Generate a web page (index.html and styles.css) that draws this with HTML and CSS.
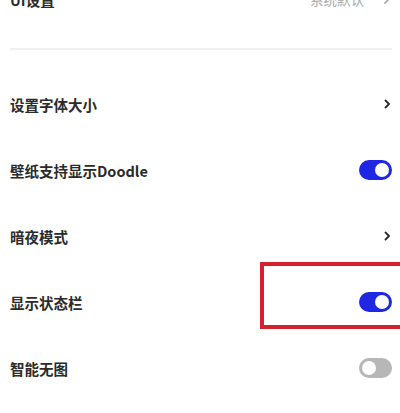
FILE: index.html
```html
<!DOCTYPE html>
<html lang="zh-CN">
<head>
  <meta charset="UTF-8" />
  <meta name="viewport" content="width=device-width, initial-scale=1.0"/>
  <title>设置</title>
  <link rel="stylesheet" href="styles.css">
</head>
<body>
  <div class="settings">
    <div class="item top">
      <span class="label">UI设置</span>
      <span class="value">系统默认</span>
      <svg class="chevron faded" viewBox="0 0 6 10" width="6" height="10"><path d="M1 1l4 4-4 4" /></svg>
    </div>

    <div class="divider"></div>

    <div class="list">
      <div class="item">
        <span class="label">设置字体大小</span>
        <svg class="chevron" viewBox="0 0 6 10" width="6" height="10"><path d="M1.5 1.5l3.5 3.5-3.5 3.5" /></svg>
      </div>
      <div class="item">
        <span class="label">壁纸支持显示Doodle</span>
        <span class="switch on"><span class="knob"></span></span>
      </div>
      <div class="item">
        <span class="label">暗夜模式</span>
        <svg class="chevron" viewBox="0 0 6 10" width="6" height="10"><path d="M1.5 1.5l3.5 3.5-3.5 3.5" /></svg>
      </div>
      <div class="item">
        <span class="label">显示状态栏</span>
        <span class="switch on"><span class="knob"></span></span>
      </div>
      <div class="item">
        <span class="label">智能无图</span>
        <span class="switch"><span class="knob"></span></span>
      </div>
    </div>

    <div class="highlight"></div>
  </div>
</body>
</html>
```

FILE: styles.css
```css
* { box-sizing: border-box; }

body {
  margin: 0;
  background-color: #ffffff;
  font-family: "Noto Sans CJK SC", "Noto Sans", sans-serif;
  color: #2b2b2b;
}

.settings {
  position: relative;
  width: 400px;
  height: 413px;
  overflow: hidden;
}

.item {
  display: flex;
  align-items: center;
  height: 66px;
  padding: 0 8px 0 10px;
}

.item.top {
  height: 36px;
  margin-top: -19px;
}

.label {
  flex-grow: 1;
  font-size: 14.5px;
  font-weight: 700;
}

.value {
  font-size: 13.5px;
  color: #a8a8a8;
  margin-right: 20px;
}

.chevron {
  margin-right: 2px;
  fill: none;
  stroke: #2b2b2b;
  stroke-width: 1.8;
  stroke-linecap: round;
  stroke-linejoin: round;
}

.chevron.faded {
  stroke: #b0b0b0;
}

.divider {
  margin: 31px 8px 0 10px;
  height: 2px;
  background-color: #f1f1f1;
}

.list {
  margin-top: 21px;
}

.switch {
  display: flex;
  align-items: center;
  justify-content: flex-start;
  width: 33px;
  height: 20px;
  padding: 0 3px;
  border-radius: 10px;
  background-color: #b7b7b7;
}

.switch.on {
  justify-content: flex-end;
  background-color: #1f27e4;
}

.knob {
  width: 14px;
  height: 14px;
  border-radius: 50%;
  background-color: #ffffff;
}

.highlight {
  position: absolute;
  left: 260px;
  top: 262px;
  width: 150px;
  height: 67px;
  border: 4px solid #d3222f;
}
```
